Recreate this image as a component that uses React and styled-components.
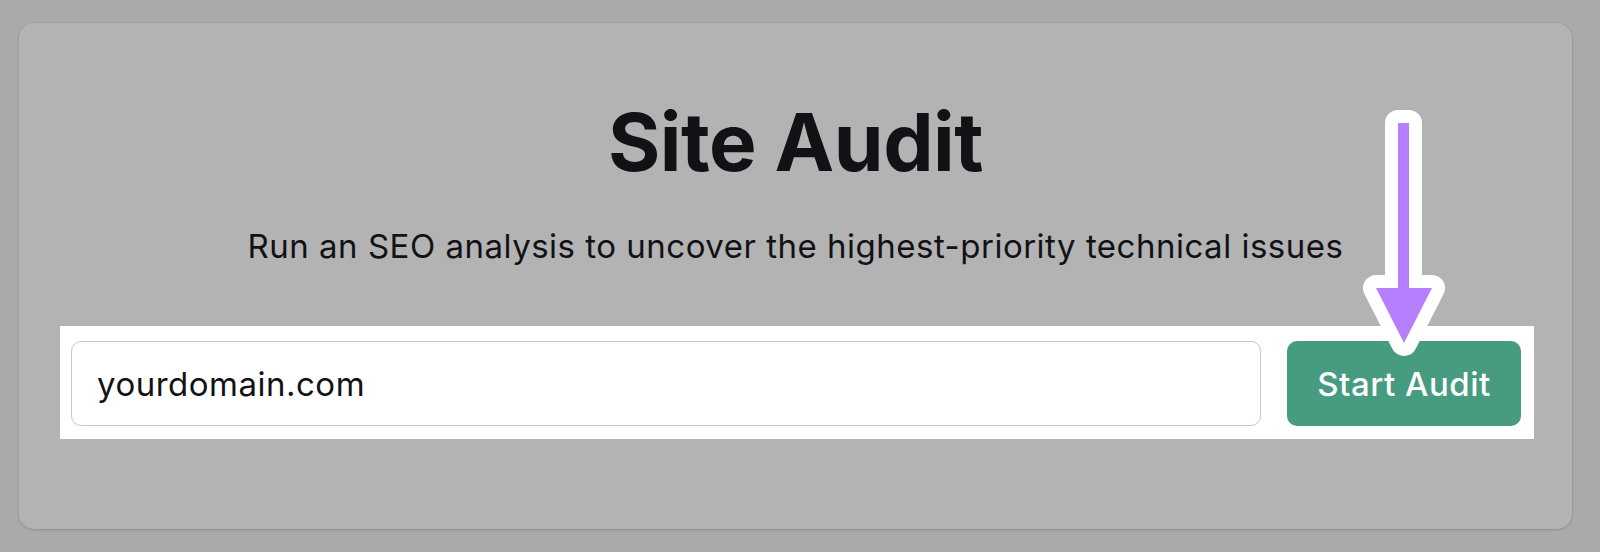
import React from "react";
import styled, { createGlobalStyle } from "styled-components";

const Global = createGlobalStyle`
  html, body { margin: 0; padding: 0; background: #a9aaac; }
  body { font-family: Inter, "Noto Sans", sans-serif; }
  * { box-sizing: border-box; }
`;

const Page = styled.div`
  width: 1600px;
  height: 552px;
  padding: 23px 28px 0 19px;
  background: #a9aaac;
`;

const Card = styled.section`
  position: relative;
  width: 1553px;
  height: 506px;
  background: #b3b3b3;
  border-radius: 15px;
  box-shadow: 0 0 0 1px rgba(0, 0, 0, 0.04), 0 1px 3px rgba(0, 0, 0, 0.12);
  display: flex;
  flex-direction: column;
  align-items: center;
  padding-top: 79px;
`;

const Title = styled.h1`
  margin: 0;
  font-family: Inter, sans-serif;
  font-weight: 700;
  font-size: 80px;
  line-height: 80px;
  color: #121216;
  letter-spacing: -0.5px;
`;

const Subtitle = styled.p`
  margin: 45px 0 0;
  font-family: Inter, sans-serif;
  font-weight: 400;
  font-size: 33px;
  line-height: 38px;
  letter-spacing: 0.5px;
  color: #121216;
`;

const FormBand = styled.div`
  align-self: flex-start;
  margin: 61px 0 0 41px;
  width: 1474px;
  background: #ffffff;
  padding: 15px 13px 13px 11px;
  display: flex;
  gap: 26px;
`;

const DomainInput = styled.div`
  flex: 1;
  height: 85px;
  border: 1.5px solid #c4c7cd;
  border-radius: 10px;
  background: #ffffff;
  display: flex;
  align-items: center;
  padding-left: 25px;
  font-family: Inter, sans-serif;
  font-size: 33px;
  letter-spacing: 0.5px;
  color: #121216;
`;

const StartButton = styled.button`
  width: 234px;
  height: 85px;
  border: none;
  border-radius: 10px;
  background: #469b80;
  color: #ffffff;
  font-family: Inter, sans-serif;
  font-weight: 500;
  font-size: 33px;
  letter-spacing: 0.5px;
  display: flex;
  align-items: center;
  justify-content: center;
  padding: 0;
`;

const ArrowOverlay = styled.svg`
  position: absolute;
  left: 1331px;
  top: 77px;
  z-index: 2;
  overflow: visible;
`;

const arrowPath = "M48,23 L59,23 L59,188 L82,188 L54,243 L26,188 L48,188 Z";

export default function App() {
  return (
    <>
      <Global />
      <Page>
        <Card>
          <Title>Site Audit</Title>
          <Subtitle>Run an SEO analysis to uncover the highest-priority technical issues</Subtitle>
          <FormBand>
            <DomainInput>yourdomain.com</DomainInput>
            <StartButton>Start Audit</StartButton>
          </FormBand>
          <ArrowOverlay width="110" height="280" viewBox="0 0 110 280">
            <path d={arrowPath} fill="#ffffff" stroke="#ffffff" strokeWidth="26" strokeLinejoin="round" />
            <path d={arrowPath} fill="#b580ff" />
          </ArrowOverlay>
        </Card>
      </Page>
    </>
  );
}
